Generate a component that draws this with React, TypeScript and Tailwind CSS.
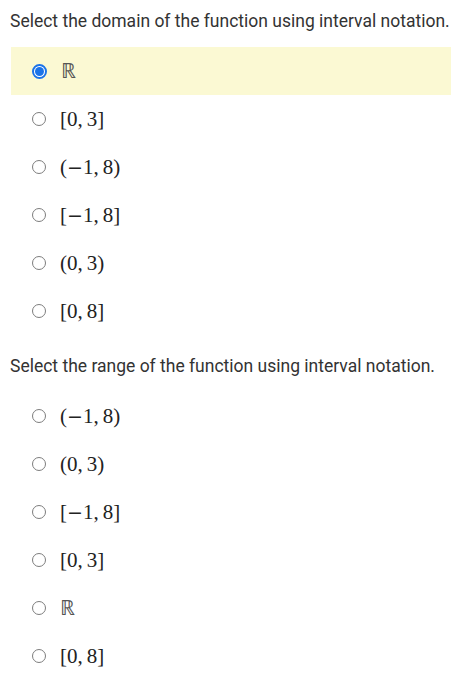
const domain: { label: string; selected?: boolean }[] = [
  { label: "R", selected: true },
  { label: "[0,3]" },
  { label: "(-1,8)" },
  { label: "[-1,8]" },
  { label: "(0,3)" },
  { label: "[0,8]" },
];

const range: { label: string; selected?: boolean }[] = [
  { label: "(-1,8)" },
  { label: "(0,3)" },
  { label: "[-1,8]" },
  { label: "[0,3]" },
  { label: "R" },
  { label: "[0,8]" },
];

function Radio({ selected }: { selected?: boolean }) {
  if (selected) {
    return (
      <span className="flex h-[15px] w-[15px] items-center justify-center rounded-full border-2 border-[#1a73e8] bg-white">
        <span className="h-[9px] w-[9px] rounded-full bg-[#1a73e8]" />
      </span>
    );
  }
  return <span className="h-[14px] w-[14px] rounded-full border border-[#7d7d7d] bg-white" />;
}

// renders interval notation roughly like KaTeX output
function MathText({ label }: { label: string }) {
  if (label === "R") {
    return (
      <span className="text-[21px] font-extralight leading-none text-[#555]" style={{ fontFamily: '"DejaVu Sans", serif' }}>
        ℝ
      </span>
    );
  }
  return (
    <span className="text-[21px] leading-none text-[#222]" style={{ fontFamily: '"Liberation Serif", serif' }}>
      {label.split("").map((c, i) => {
        if (c === "-")
          return (
            <span key={i} className="inline-block" style={{ fontFamily: '"DejaVu Serif", serif' }}>
              <span className="text-[19px] font-extralight">−</span>
            </span>
          );
        if (c === ",") return <span key={i} className="mr-[4px]">,</span>;
        return <span key={i}>{c}</span>;
      })}
    </span>
  );
}

function Option({ label, selected }: { label: string; selected?: boolean }) {
  return (
    <div
      className={`ml-[11px] flex h-[48px] items-center gap-[14px] pl-[21px] ${selected ? "bg-[#fbf9d3]" : ""}`}
    >
      <Radio selected={selected} />
      <MathText label={label} />
    </div>
  );
}

export default function App() {
  return (
    <div className="w-[451px] bg-white text-[#333]" style={{ fontFamily: "Roboto, sans-serif" }}>
      <p className="whitespace-nowrap pl-[10px] pt-[9px] pb-[14px] text-[17.5px] leading-[24px]">
        Select the domain of the function using interval notation.
      </p>
      {domain.map((o, i) => (
        <Option key={i} {...o} />
      ))}
      <p className="whitespace-nowrap pl-[10px] pt-[19px] pb-[14px] text-[17.5px] leading-[24px]">
        Select the range of the function using interval notation.
      </p>
      {range.map((o, i) => (
        <Option key={i} {...o} />
      ))}
    </div>
  );
}
